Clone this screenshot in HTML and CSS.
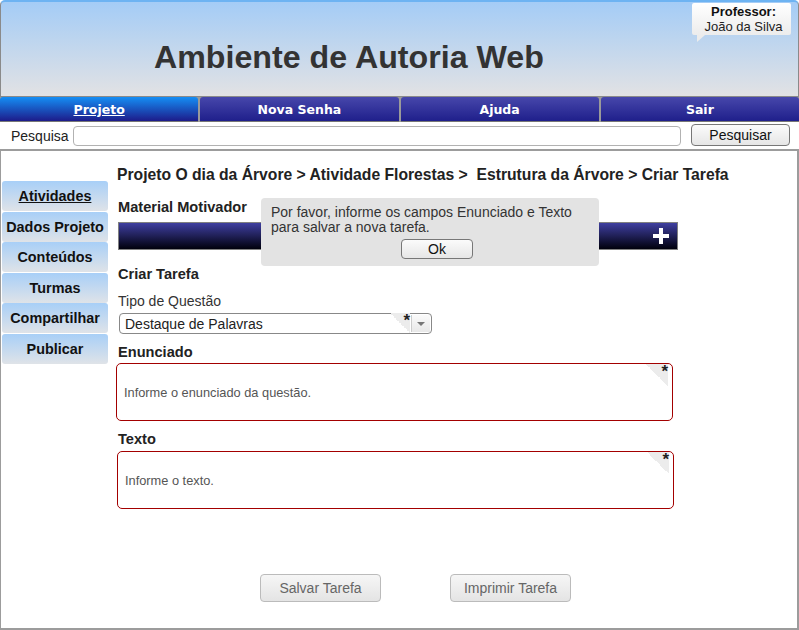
FILE: index.html
```html
<!DOCTYPE html>
<html lang="pt">
<head>
<meta charset="utf-8">
<title>Ambiente de Autoria Web</title>
<link rel="stylesheet" href="styles.css">
</head>
<body>
<header class="header">
  <h1 class="title">Ambiente de Autoria Web</h1>
  <div class="prof">
    <div class="prof-label">Professor:</div>
    <div class="prof-name">João da Silva</div>
    <span class="prof-tail"></span>
  </div>
</header>
<nav class="nav">
  <a class="tab active" href="#">Projeto</a>
  <a class="tab" href="#">Nova Senha</a>
  <a class="tab" href="#">Ajuda</a>
  <a class="tab" href="#">Sair</a>
</nav>
<div class="search">
  <span class="search-label">Pesquisa</span>
  <div class="search-input"></div>
  <button class="btn search-btn">Pesquisar</button>
</div>
<main class="main">
  <aside class="side">
    <a class="side-item current" href="#">Atividades</a>
    <a class="side-item" href="#">Dados Projeto</a>
    <a class="side-item" href="#">Conteúdos</a>
    <a class="side-item" href="#">Turmas</a>
    <a class="side-item" href="#">Compartilhar</a>
    <a class="side-item" href="#">Publicar</a>
  </aside>
  <section class="content">
    <div class="crumb">Projeto O dia da Árvore &gt; Atividade Florestas &gt;&nbsp; Estrutura da Árvore &gt; Criar Tarefa</div>
    <div class="label mm">Material Motivador</div>
    <div class="bar">
      <svg class="plus" width="16" height="16" viewBox="0 0 16 16"><path d="M6 0h4v6h6v4h-6v6h-4v-6h-6v-4h6z" fill="#fff"/></svg>
    </div>
    <div class="label ct">Criar Tarefa</div>
    <div class="field-label">Tipo de Questão</div>
    <div class="select">
      <span class="select-text">Destaque de Palavras</span>
      <span class="req req-sel">*</span>
      <span class="select-btn"><span class="arrow"></span></span>
    </div>
    <div class="label en">Enunciado</div>
    <div class="area"><span class="req">*</span>Informe o enunciado da questão.</div>
    <div class="label tx">Texto</div>
    <div class="area area2"><span class="req">*</span>Informe o texto.</div>
    <div class="actions">
      <button class="btn act">Salvar Tarefa</button>
      <button class="btn act">Imprimir Tarefa</button>
    </div>
    <div class="dialog">
      <p class="dialog-text">Por favor, informe os campos Enunciado e Texto<br>para salvar a nova tarefa.</p>
      <button class="btn ok">Ok</button>
    </div>
  </section>
</main>
</body>
</html>
```
FILE: styles.css
```css
* { box-sizing: border-box; }
html, body { margin: 0; padding: 0; background: #fff; }
body {
  width: 799px;
  height: 630px;
  overflow: hidden;
  font-family: "Liberation Sans", Arial, sans-serif;
  color: #222;
}

.header {
  position: relative;
  height: 97px;
  background: linear-gradient(#a4ccf6, #e2e2e4);
  border: 1px solid #8a8a8a;
  border-top: 2px solid #6db3f2;
  border-radius: 5px 5px 0 0;
  padding-left: 153px;
  display: flex;
  align-items: center;
}
.title {
  margin: 0;
  margin-top: 16px;
  font-size: 32.2px;
  font-weight: bold;
  color: #333;
}
.prof {
  position: absolute;
  top: 1px;
  left: 691px;
  width: 99px;
  height: 32px;
  background: linear-gradient(#ffffff, #ececec);
  border-radius: 2px;
  text-align: center;
  font-size: 13px;
  line-height: 15px;
  padding: 1px 0 0 4px;
}
.prof-label { font-weight: bold; color: #111; }
.prof-name { color: #222; }
.prof-tail {
  position: absolute;
  left: 5px;
  bottom: -7px;
  width: 0;
  height: 0;
  border-top: 7px solid #ececec;
  border-right: 8px solid transparent;
}

.nav {
  display: flex;
  gap: 2px;
  height: 25px;
  background: #9a9a9a;
}
.tab {
  flex: 1;
  display: flex;
  align-items: center;
  justify-content: center;
  background: linear-gradient(#4747ab, #1f1f8b);
  border-radius: 3px 3px 0 0;
  color: #fff;
  font-family: "DejaVu Sans", Verdana, sans-serif;
  font-weight: bold;
  font-size: 12.5px;
  text-decoration: none;
  border-bottom: 1px solid #777;
}
.tab.active {
  background: linear-gradient(#158ef4, #1d1b8a);
  text-decoration: underline;
}

.search {
  display: flex;
  align-items: center;
  height: 27px;
  padding-left: 11px;
}
.search-label { font-size: 14px; color: #222; width: 62px; }
.search-input {
  width: 608px;
  height: 20px;
  border: 1px solid #b2b2b2;
  border-radius: 4px;
  margin-top: 1px;
}
.btn {
  font-family: "Liberation Sans", Arial, sans-serif;
  background: linear-gradient(#fbfbfb, #e6e6e6);
  border: 1px solid #777;
  border-radius: 4px;
  padding: 0;
  color: #111;
}
.search-btn {
  margin-left: 10px;
  width: 99px;
  height: 22px;
  font-size: 14px;
  margin-top: -1px;
}

.main {
  display: flex;
  height: 481px;
  border: 2px solid #9c9c9c;
  border-left-width: 1px;
}
.side {
  width: 107px;
  padding: 30px 0 0 1px;
  display: flex;
  flex-direction: column;
  gap: 0.6px;
}
.side-item {
  height: 30px;
  display: flex;
  align-items: center;
  justify-content: center;
  background: linear-gradient(#a8cff7, #dfe3e8);
  border-radius: 3px;
  color: #111;
  font-weight: bold;
  font-size: 14.4px;
  text-decoration: none;
}
.side-item.current { text-decoration: underline; }

.content {
  position: relative;
  margin-left: 9px;
  width: 560px;
  padding-top: 15px;
}
.crumb {
  font-size: 15.7px;
  line-height: 18px;
  font-weight: bold;
  color: #222;
  white-space: nowrap;
}
.label {
  font-size: 14.6px;
  line-height: 16px;
  font-weight: bold;
  color: #222;
  margin-left: 1px;
}
.mm { margin-top: 15px; }
.bar {
  position: relative;
  margin-top: 7px;
  margin-left: 1px;
  width: 560px;
  height: 28px;
  background: linear-gradient(#3f3fa0, #00000c);
  border: 1px solid #808080;
}
.plus { position: absolute; right: 8px; top: 5px; }
.ct { margin-top: 16px; }
.field-label {
  margin-top: 11px;
  margin-left: 1px;
  font-size: 14px;
  line-height: 16px;
  color: #333;
}
.select {
  position: relative;
  margin-top: 4px;
  margin-left: 2px;
  width: 313px;
  height: 21px;
  border: 1px solid #888;
  border-radius: 4px;
  font-size: 14px;
  display: flex;
  align-items: center;
  padding-left: 5px;
  color: #222;
}
.select-btn {
  position: absolute;
  right: 1px;
  top: 1px;
  width: 19px;
  height: 17px;
  background: linear-gradient(#fafafa, #e8e8e8);
  border-left: 1px solid #ccc;
  display: flex;
  align-items: center;
  justify-content: center;
}
.arrow {
  width: 0;
  height: 0;
  border-top: 4px solid #777;
  border-left: 4px solid transparent;
  border-right: 4px solid transparent;
}
.req {
  position: absolute;
  right: 4px;
  top: 0;
  width: 22px;
  height: 22px;
  background: linear-gradient(45deg, transparent 50%, #ececec 50%);
  font-size: 17px;
  font-weight: bold;
  line-height: 16px;
  text-align: right;
  color: #222;
}
.req-sel { right: 21px; top: -1px; width: 20px; height: 20px; }

.en { margin-top: 10px; }
.area {
  position: relative;
  margin-top: 3px;
  margin-left: -1px;
  width: 557px;
  height: 58px;
  border: 1px solid #a30000;
  border-radius: 5px;
  padding-left: 7px;
  display: flex;
  align-items: center;
  font-size: 12.8px;
  color: #555;
}
.tx { margin-top: 10px; }
.area2 { margin-top: 4px; margin-left: 0; }

.actions {
  display: flex;
  gap: 69px;
  margin-top: 65px;
  margin-left: 143px;
}
.act {
  width: 121px;
  height: 28px;
  font-size: 14px;
  color: #666;
  border-color: #bbb;
  background: linear-gradient(#f6f6f6, #e4e4e4);
}

.dialog {
  position: absolute;
  left: 144px;
  top: 47px;
  width: 338px;
  height: 68px;
  background: #e3e3e3;
  border-radius: 4px;
  text-align: center;
}
.dialog-text {
  margin: 0;
  padding: 7px 0 0 10px;
  text-align: left;
  font-size: 14px;
  line-height: 15px;
  color: #333;
}
.ok {
  margin-top: 4px;
  margin-left: 14px;
  width: 72px;
  height: 20px;
  font-size: 14px;
  color: #111;
}
```
